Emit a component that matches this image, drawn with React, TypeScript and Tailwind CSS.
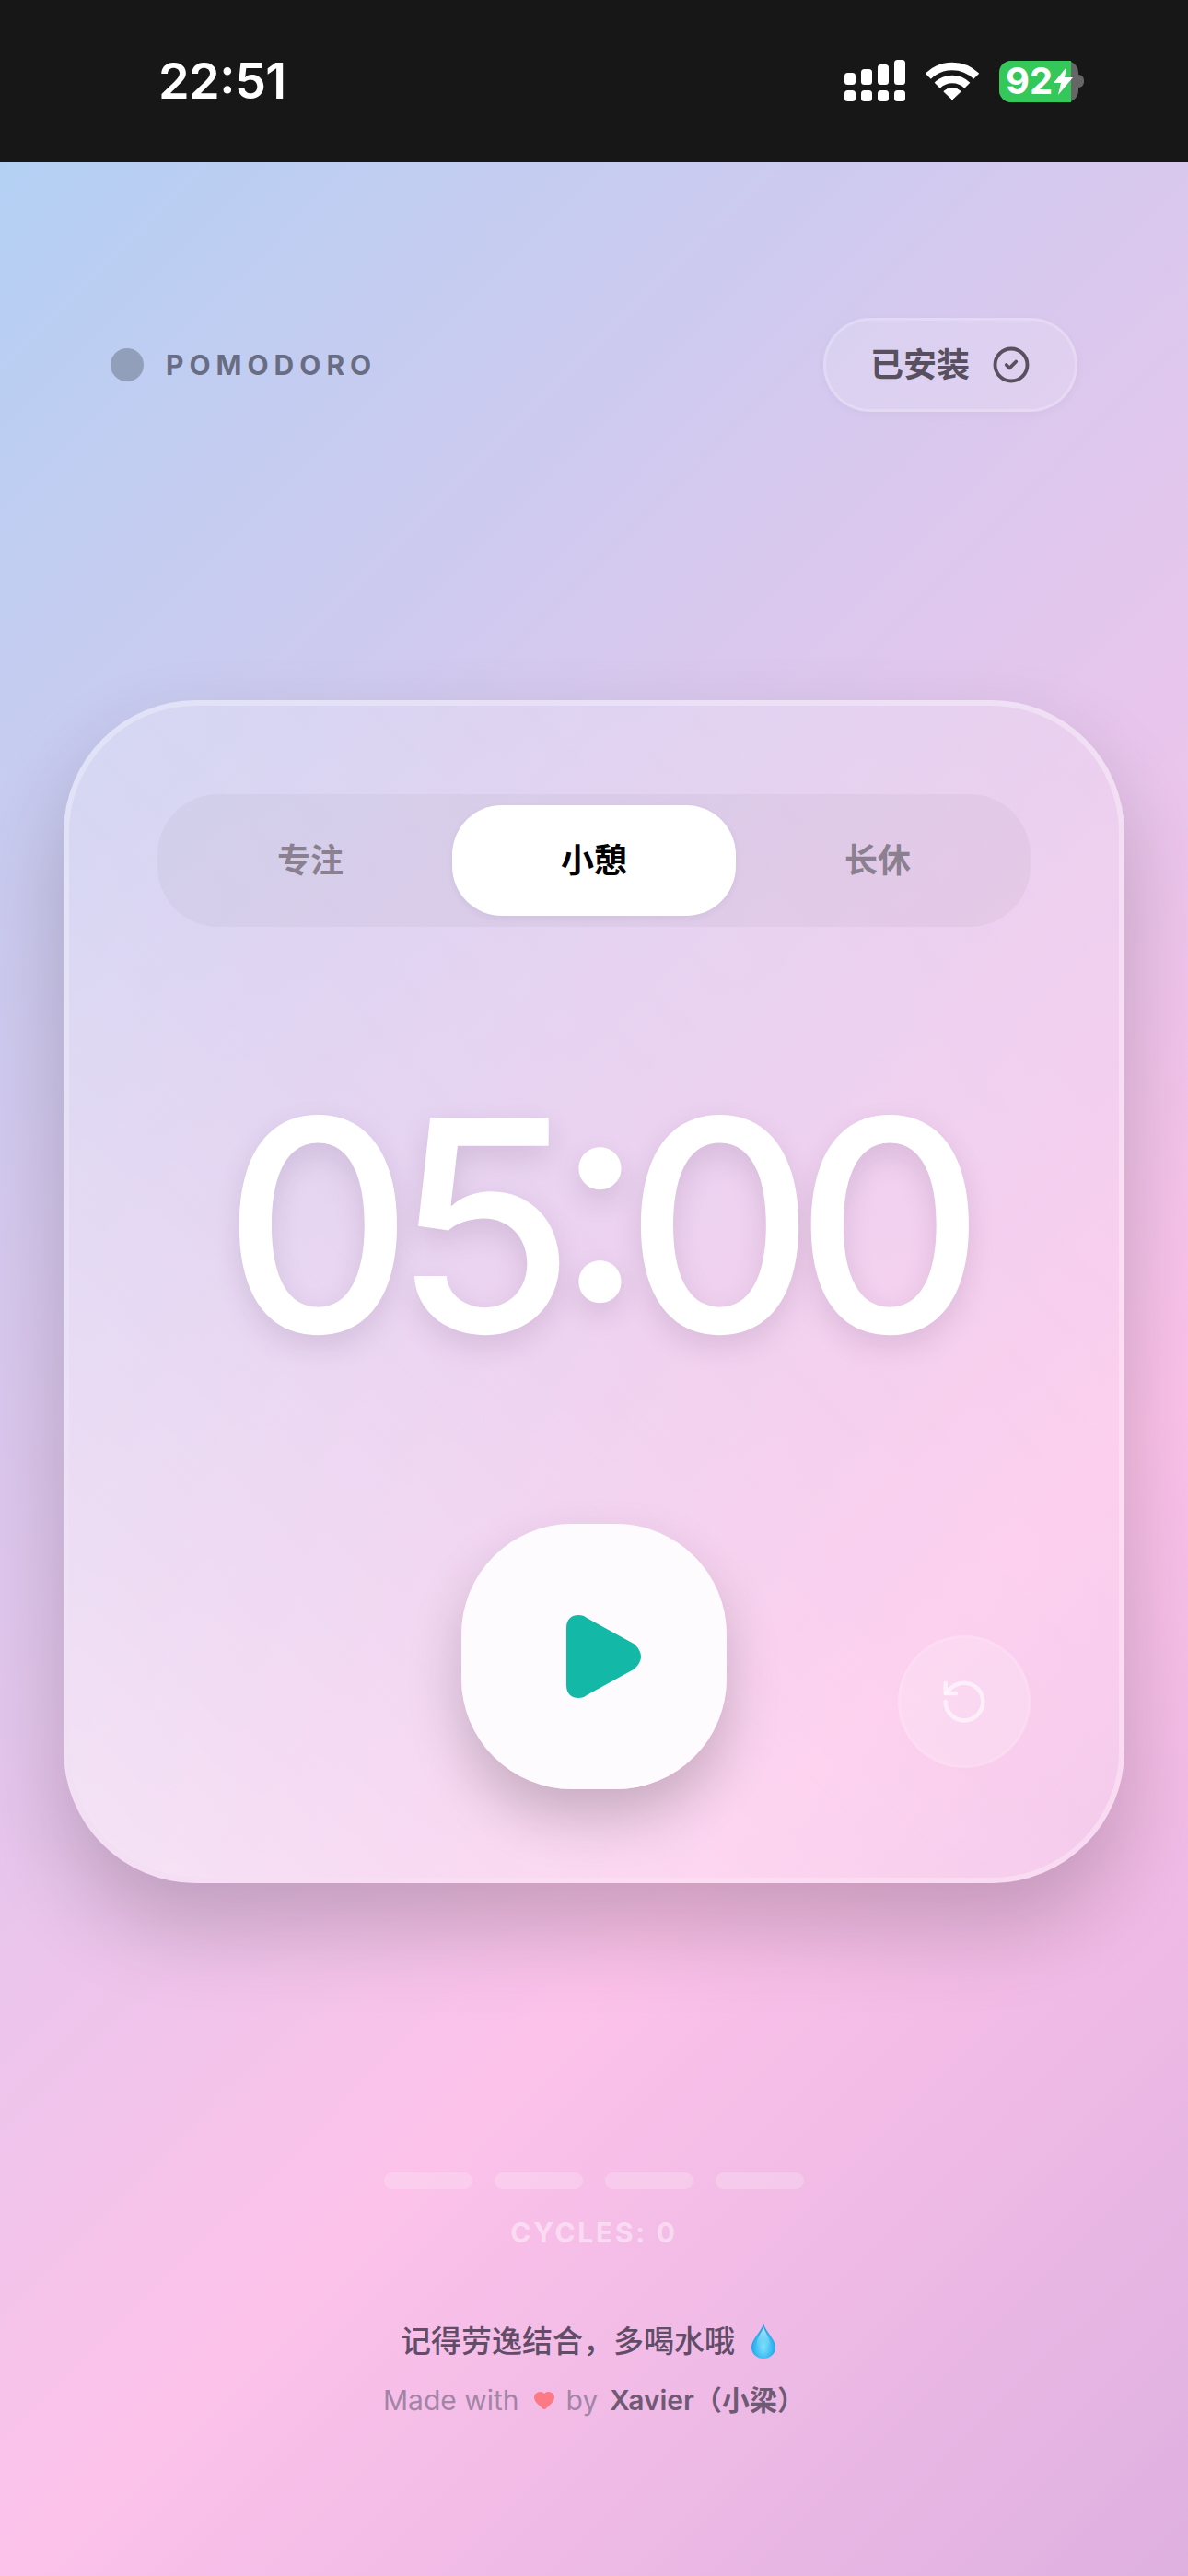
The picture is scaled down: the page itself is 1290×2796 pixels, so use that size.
import { CircleCheck, Heart, RotateCcw } from "lucide-react";

const tabs = ["专注", "小憩", "长休"];
const cycleBars = [0, 1, 2, 3];

function SignalIcon() {
  return (
    <svg width="66" height="46" viewBox="0 0 66 46" fill="#fff">
      <rect x="0" y="14" width="12" height="13" rx="3.5" />
      <rect x="18" y="10" width="12" height="17" rx="3.5" />
      <rect x="36" y="5" width="12" height="22" rx="3.5" />
      <rect x="54" y="0" width="12" height="27" rx="3.5" />
      <rect x="0" y="33" width="12" height="12" rx="3.5" />
      <rect x="18" y="33" width="12" height="12" rx="3.5" />
      <rect x="36" y="33" width="12" height="12" rx="3.5" />
      <rect x="54" y="33" width="12" height="12" rx="3.5" />
    </svg>
  );
}

function WifiIcon() {
  return (
    <svg width="58" height="42" viewBox="0 0 58 42" fill="none">
      <path d="M2.8 15.8A37 37 0 0 1 55.2 15.8" stroke="#fff" strokeWidth="8.5" />
      <path d="M12.7 25.7A23 23 0 0 1 45.3 25.7" stroke="#fff" strokeWidth="8.5" />
      <path d="M29 41 19.8 32.3A13 13 0 0 1 38.2 32.3Z" fill="#fff" stroke="#fff" strokeWidth="1" strokeLinejoin="round" />
    </svg>
  );
}

function Battery() {
  return (
    <div className="flex items-center">
      <div className="relative flex h-[45px] w-[86px] items-center rounded-[13px] bg-[#666666] pl-[7px]">
        <div className="absolute inset-y-0 left-0 w-[78px] rounded-l-[13px] bg-[#34c759]" />
        <span className="relative text-[40px] leading-none font-bold text-white">92</span>
        <svg className="relative ml-[1px]" width="21" height="30" viewBox="0 0 21 30" fill="#fff">
          <path d="M14 0 0 17h8L5 30 21 11h-9Z" />
        </svg>
      </div>
      <div className="h-[14px] w-[6px] rounded-r-full bg-[#666666]" />
    </div>
  );
}

function StatusBar() {
  return (
    <div className="flex h-[176px] shrink-0 items-center justify-between bg-[#171717] pr-[113px] pl-[172px]">
      <span className="text-[54px] leading-none font-semibold tracking-[-0.01em] text-white [font-feature-settings:'case']">22:51</span>
      <div className="flex items-center gap-[22px]">
        <SignalIcon />
        <WifiIcon />
        <Battery />
      </div>
    </div>
  );
}

function PlayIcon() {
  return (
    <svg width="81" height="90" viewBox="0 0 81 90" fill="#14b8a6">
      <path d="M0 14C0 4 6 0 13 0 17 0 20 1 22 3L73 31C78 35 81 40 81 45 81 50 78 55 73 59L22 87C20 89 17 90 13 90 6 90 0 86 0 76Z" />
    </svg>
  );
}

function Droplet() {
  return (
    <svg className="mr-[13px] ml-[18px]" width="26" height="38" viewBox="0 0 26 38">
      <defs>
        <radialGradient id="drop" cx="0.5" cy="0.68" r="0.6">
          <stop offset="0" stopColor="#7fe0fa" />
          <stop offset="0.55" stopColor="#3dbcf2" />
          <stop offset="1" stopColor="#1493e4" />
        </radialGradient>
        <linearGradient id="dropTop" x1="0" y1="0" x2="0" y2="1">
          <stop offset="0" stopColor="#d4f5fd" stopOpacity="0.95" />
          <stop offset="1" stopColor="#8fe3fa" stopOpacity="0" />
        </linearGradient>
      </defs>
      <path d="M13 0C15 9 26 16 26 26A13 12 0 0 1 0 26C0 16 11 9 13 0Z" fill="url(#drop)" />
      <path d="M13 3C14.5 10 20 15 20 21A7 6 0 0 1 6 21C6 15 11.5 10 13 3Z" fill="url(#dropTop)" />
    </svg>
  );
}

export default function App() {
  return (
    <div className="flex h-[2796px] w-[1290px] flex-col overflow-hidden font-['Inter','Noto_Sans_CJK_SC',sans-serif]">
      <StatusBar />
      <main className="flex flex-1 flex-col bg-[linear-gradient(135deg,#b3d0f3_0%,#d9c8ee_33%,#fcc2ea_67%,#deb0e0_100%)]">
        <header className="mt-[169px] flex items-center justify-between px-[120px]">
          <div className="flex items-center gap-[24px]">
            <span className="h-[36px] w-[36px] rounded-full bg-[#929fba]" />
            <span className="text-[30px] leading-none font-bold tracking-[0.2em] text-[#696d84]">POMODORO</span>
          </div>
          <button
            type="button"
            className="flex h-[102px] w-[276px] items-center justify-center gap-[24px] rounded-full border-[3px] border-white/20 bg-white/15 text-[36px] font-semibold text-[#58505f] shadow-[0_3px_12px_rgb(0_0_0/0.03)]"
          >
            已安装
            <CircleCheck size={42} strokeWidth={2.2} />
          </button>
        </header>

        <section className="mx-auto mt-[313px] h-[1284px] w-[1152px] rounded-[144px] border-[6px] border-white/45 bg-[linear-gradient(45deg,rgb(255_255_255/0.52)_0%,rgb(255_255_255/0.4)_15%,rgb(255_255_255/0.24)_47%,rgb(255_255_255/0.18)_100%)] bg-clip-padding px-[96px] pt-[96px] shadow-[0_48px_96px_rgb(0_0_0/0.2)]">
          <div className="grid h-[144px] grid-cols-3 rounded-[66px] bg-black/[0.03] p-[12px]">
            {tabs.map((tab, i) => (
              <div
                key={tab}
                className={
                  i === 1
                    ? "flex items-center justify-center rounded-[54px] bg-white text-[36px] font-semibold text-black shadow-[0_3px_9px_rgb(0_0_0/0.05)]"
                    : "flex items-center justify-center text-[36px] font-semibold text-[#8a8090]"
                }
              >
                {tab}
              </div>
            ))}
          </div>

          <div className="mt-[124px] text-center text-[320px] leading-[400px] font-medium tracking-[-0.068em] text-white [font-feature-settings:'case'] [text-shadow:0_12px_30px_rgb(60_30_70/0.13)]">
            05:00
          </div>

          <div className="mt-[124px] grid grid-cols-[1fr_288px_1fr] items-end">
            <div />
            <button
              type="button"
              className="flex h-[288px] w-[288px] items-center justify-center rounded-[120px] bg-white/90 pl-[21px] shadow-[0_30px_60px_rgb(0_0_0/0.2)]"
            >
              <PlayIcon />
            </button>
            <button
              type="button"
              className="mb-[23px] flex h-[144px] w-[144px] items-center justify-center justify-self-end rounded-full border-[3px] border-white/10 bg-white/20 text-white/60"
            >
              <RotateCcw size={54} strokeWidth={2} />
            </button>
          </div>
        </section>

        <div className="mt-[314px] flex justify-center gap-[24px]">
          {cycleBars.map((bar) => (
            <span key={bar} className="h-[18px] w-[96px] rounded-full bg-white/20" />
          ))}
        </div>
        <p className="mt-[29px] text-center text-[30px] leading-[36px] font-bold tracking-[0.09em] text-white/45">CYCLES: 0</p>

        <div className="mt-[76px] flex items-center justify-center text-[33px] leading-[48px] font-medium text-[#614d68]">
          记得劳逸结合，多喝水哦
          <Droplet />
        </div>
        <div className="mt-[16px] flex items-center justify-center text-[30px] leading-[48px] text-[#a285a6]">
          Made with
          <Heart className="mr-[12px] ml-[15px]" size={24} fill="#fb7a85" stroke="#fb7a85" />
          by
          <span className="ml-[13px] font-semibold text-[#6f5a75]">Xavier（小梁）</span>
        </div>
      </main>
    </div>
  );
}
